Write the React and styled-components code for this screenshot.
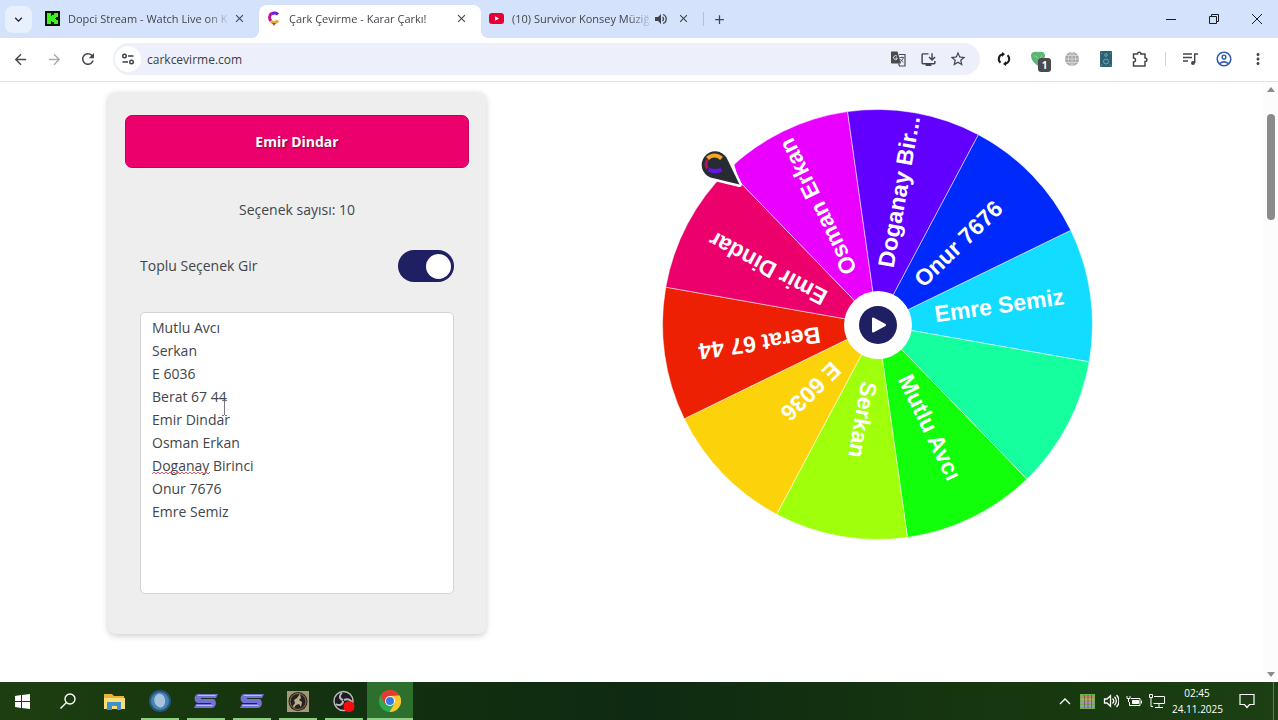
import { useState } from 'react'
import styled, { createGlobalStyle, css } from 'styled-components'
import {
  MdArrowBack,
  MdArrowForward,
  MdRefresh,
  MdStarBorder,
  MdOutlineInstallDesktop,
  MdOutlineAccountCircle,
  MdMoreVert,
  MdClose,
  MdAdd,
  MdKeyboardArrowDown
} from 'react-icons/md'


const GlobalStyle = createGlobalStyle`
  * {
    box-sizing: border-box;
  }
  body {
    margin: 0;
    font-family: 'Open Sans', 'Noto Sans', sans-serif;
    color: #42454a;
    background: #fff;
  }
  button {
    padding: 0;
    border: 0;
    font: inherit;
    color: inherit;
    background: none;
    cursor: pointer;
  }
  svg {
    display: block;
    flex: none;
  }
`

const Screen = styled.div`
  display: flex;
  flex-direction: column;
  min-height: 100vh;
`

/* Tab strip */

const TabStrip = styled.div`
  display: flex;
  align-items: stretch;
  height: 38px;
  padding-left: 5px;
  background: #d5e2fc;
`
const TabSearch = styled.button`
  display: grid;
  place-items: center;
  align-self: center;
  width: 27px;
  height: 27px;
  margin-right: 5px;
  border-radius: 8px;
  color: #1d1f24;
  background: #e8f0fe;
`
const Tab = styled.div`
  position: relative;
  display: flex;
  align-items: center;
  width: 222px;
  margin-top: 5px;
  padding: 0 13px 6px 8px;
  border-radius: 8px 8px 0 0;
  ${props => props.$active && css`
    background: #fff;
    &::before,
    &::after {
      content: '';
      position: absolute;
      bottom: 0;
      width: 8px;
      height: 8px;
    }
    &::before {
      right: 100%;
      background: radial-gradient(circle at 0 0, transparent 8px, #fff 8px);
    }
    &::after {
      left: 100%;
      background: radial-gradient(circle at 100% 0, transparent 8px, #fff 8px);
    }
  `}
`
const TabTitle = styled.button`
  flex: 1;
  min-width: 0;
  margin: 0 1px 0 8px;
  overflow: hidden;
  font-size: 11px;
  line-height: 16px;
  text-align: left;
  white-space: nowrap;
  mask-image: linear-gradient(90deg, #000 calc(100% - 24px), transparent);
`
const TabButton = styled.button`
  display: grid;
  place-items: center;
  width: 14px;
  height: 16px;
  margin-left: ${props => (props.$spaced ? '8px' : '0')};
`
const StripDivider = styled.div`
  align-self: center;
  width: 1px;
  height: 14px;
  background: #a9c1ee;
`
const NewTab = styled.button`
  display: grid;
  place-items: center;
  width: 30px;
`
const WindowButtons = styled.div`
  display: flex;
  margin-left: auto;
`
const WindowButton = styled.button`
  display: grid;
  place-items: center;
  width: 43px;
  color: #1b1d22;
`

/* Toolbar */

const Toolbar = styled.div`
  display: flex;
  align-items: center;
  height: 44px;
  padding: 0 3px 1px;
  border-bottom: 1px solid #dfe1e5;
  background: #fff;
`
const ToolButton = styled.button`
  position: relative;
  display: grid;
  place-items: center;
  width: 34px;
  height: 34px;
  color: ${props => props.$color || '#44474c'};
`
const AddressBar = styled.div`
  display: flex;
  align-items: center;
  flex: 1;
  height: 32px;
  margin: 0 7px 0 8px;
  padding: 0 7px 0 2px;
  border-radius: 16px;
  background: #edeffa;
`
const SiteInfo = styled.button`
  display: grid;
  place-items: center;
  width: 26px;
  height: 26px;
  border-radius: 13px;
  background: #fff;
`
const AddressInput = styled.input`
  flex: 1;
  min-width: 0;
  margin-left: 6px;
  padding: 0;
  border: 0;
  outline: 0;
  font: inherit;
  font-size: 12px;
  color: #3c3f44;
  background: transparent;
`
const AddressButton = styled.button`
  display: grid;
  place-items: center;
  width: 30px;
  height: 30px;
`
const Badge = styled.span`
  position: absolute;
  right: 4px;
  bottom: 4px;
  width: 13px;
  height: 14px;
  border-radius: 3px;
  font-size: 10px;
  font-weight: 700;
  line-height: 14px;
  color: #fff;
  background: #4b4b4b;
`
const ToolDivider = styled.div`
  width: 1px;
  height: 14px;
  margin: 0 7px 0 8px;
  background: #c9d3e6;
`

/* Page */

const Viewport = styled.div`
  display: flex;
  flex: 1;
`
const Page = styled.main`
  flex: 1;
  padding: 10px 0 48px;
`
const Columns = styled.div`
  display: grid;
  grid-template-columns: minmax(0, 492px) minmax(0, 1fr);
  justify-items: center;
  align-items: start;
  max-width: 1161px;
  margin: 0 auto;
`
const Card = styled.section`
  width: 100%;
  max-width: 378px;
  padding: 23px 17px 40px;
  border-radius: 8px;
  background: #eee;
  box-shadow: 0 2px 6px rgba(0, 0, 0, 0.2);
`
const Winner = styled.button`
  width: 100%;
  height: 53px;
  border: 1px solid #c4005f;
  border-radius: 7px;
  font-size: 14px;
  font-weight: 700;
  color: #fff;
  text-shadow: 1px 1px 2px rgba(0, 0, 0, 0.4);
  background: #ec006b;
`
const Count = styled.p`
  margin: 31px 0 29px;
  font-size: 14px;
  line-height: 22px;
  text-align: center;
`
const Field = styled.label`
  display: flex;
  align-items: center;
  justify-content: space-between;
  margin: 0 15px 30px;
  font-size: 14px;
  line-height: 22px;
`
const Switch = styled.input`
  appearance: none;
  display: flex;
  align-items: center;
  width: 56px;
  height: 32px;
  margin: 0;
  padding: 0 3px;
  border-radius: 16px;
  background: #1f1f64;
  &::before {
    content: '';
    width: 25px;
    height: 25px;
    border-radius: 50%;
    background: #fff;
  }
  &:checked::before {
    margin-left: auto;
  }
`
const Editor = styled.div`
  position: relative;
  margin: 0 15px;
`
const OptionsInput = styled.textarea`
  display: block;
  width: 100%;
  height: 282px;
  padding: 3px 11px;
  border: 1px solid #d4d4d4;
  border-radius: 5px;
  outline: 0;
  resize: none;
  font: inherit;
  font-size: 14px;
  line-height: 23px;
  color: #42454a;
  background: #fff;
`
const Squiggle = styled.svg`
  position: absolute;
  top: 159px;
  left: 12px;
`
const TextCursor = styled.svg`
  position: absolute;
  top: 88px;
  left: 81px;
`
const WheelBox = styled.div`
  position: relative;
  width: 100%;
  max-width: 431px;
  margin-top: 17px;
`
const WheelSvg = styled.svg`
  width: 100%;
  overflow: visible;
  font-family: 'Liberation Sans', Arial, sans-serif;
  font-size: 23px;
  font-weight: 700;
`
const SpinButton = styled.button`
  position: absolute;
  inset: 0;
  display: grid;
  place-items: center;
  width: 68px;
  height: 68px;
  margin: auto;
  border-radius: 50%;
  background: #fff;
`
const ScrollTrack = styled.div`
  display: flex;
  flex-direction: column;
  align-items: center;
  width: 15px;
  padding: 5px 0;
  background: #fcfcfc;
`
const ScrollThumb = styled.div`
  width: 8px;
  height: 106px;
  margin: 22px 0 auto;
  border-radius: 4px;
  background: #8b8b8b;
`

/* Taskbar */

const Taskbar = styled.footer`
  display: flex;
  height: 38px;
  color: #fff;
  background: linear-gradient(90deg, #1d3f10, #12300f 30%, #0f2a12 50%, #17380f 80%, #1c3f14);
`
const TaskButton = styled.button`
  display: grid;
  place-items: center;
  width: ${props => (props.$start ? '45px' : '46px')};
  background: ${props => (props.$active ? '#2d6f2c' : 'transparent')};
  ${props => props.$open && css`
    background-image: linear-gradient(#8fce85, #8fce85);
    background-repeat: no-repeat;
    background-position: bottom;
    background-size: ${props.$active ? '100%' : '38px'} 2px;
  `}
`
const Tray = styled.div`
  display: flex;
  align-items: center;
  margin-left: auto;
`
const TrayButton = styled.button`
  display: grid;
  place-items: center;
  width: 23px;
  height: 38px;
`
const Notifications = styled(TrayButton)`
  width: 49px;
  margin-right: 2px;
`
const Clock = styled.time`
  display: block;
  width: 50px;
  margin-left: 4px;
  font-size: 10px;
  line-height: 16px;
  text-align: center;
  white-space: nowrap;
`
const ShowDesktop = styled.button`
  width: 5px;
  height: 38px;
  border-left: 1px solid #5d7a58;
`

const SLICES = [
  { label: 'Emre Semiz', color: '#12dcff' },
  { label: '', color: '#16ff9e' },
  { label: 'Mutlu Avcı', color: '#12ff0c' },
  { label: 'Serkan', color: '#a0ff0a' },
  { label: 'E 6036', color: '#fcd30b' },
  { label: 'Berat 67 44', color: '#ee2004' },
  { label: 'Emir Dindar', color: '#ec006b' },
  { label: 'Osman Erkan', color: '#ea00ff' },
  { label: 'Doganay Bir...', color: '#6200ff' },
  { label: 'Onur 7676', color: '#0029fb' }
]

const OPTIONS = [
  'Mutlu Avcı',
  'Serkan',
  'E 6036',
  'Berat 67 44',
  'Emir Dindar',
  'Osman Erkan',
  'Doganay Birinci',
  'Onur 7676',
  'Emre Semiz'
].join('\n')

const RADIUS = 215
const STEP = 360 / SLICES.length
const FIRST_ANGLE = -8

function pointAt(angle) {
  const rad = (angle * Math.PI) / 180
  return `${RADIUS * Math.cos(rad)} ${RADIUS * Math.sin(rad)}`
}

/**
 * The wheel, drawn around its own centre.
 */
function Wheel() {
  return (
    <WheelBox>
      <WheelSvg viewBox="-215.5 -215.5 431 431">
        {SLICES.map((slice, index) => {
          const angle = FIRST_ANGLE + index * STEP
          const from = pointAt(angle - STEP / 2)
          const to = pointAt(angle + STEP / 2)
          return (
            <g key={slice.color}>
              <path
                d={`M0 0L${from}A${RADIUS} ${RADIUS} 0 0 1 ${to}Z`}
                fill={slice.color}
                stroke="#fff"
                strokeOpacity="0.5"
              />
              <text
                x="58"
                y="6"
                fill="#fff"
                transform={`rotate(${angle})`}
              >
                {slice.label}
              </text>
            </g>
          )
        })}
        <g transform="translate(-163 -161)">
          <path
            d="M24.500 21.500L17 -5A15 15 0 1 0 -6 13Z"
            fill="#fff"
            stroke="#fff"
            strokeWidth="2"
            strokeLinejoin="round"
          />
          <path d="M25 21L12 -6A13.500 13.500 0 1 0 -4 14Z" fill="#fff" stroke="#fff" strokeWidth="5" strokeLinejoin="round" />
          <path d="M25 21L12 -6A13.500 13.500 0 1 0 -4 14Z" fill="#272b33" />
          <path d="M-7 -5C-3 -9 3 -9 7 -5" fill="none" stroke="#f5a623" strokeWidth="4" />
          <path d="M-7 -4C-9 -1 -9 3 -7 5" fill="none" stroke="#b0155c" strokeWidth="3" />
          <path d="M-6 6C-2 8 3 8 7 6" fill="none" stroke="#6a12e8" strokeWidth="4" />
        </g>
      </WheelSvg>
      <SpinButton aria-label="Çevir">
        <svg width="38" height="38" viewBox="0 0 38 38">
          <circle cx="19" cy="19" r="19" fill="#1f1f64" />
          <path d="M14 12.500v13L26 19z" fill="#fff" stroke="#fff" strokeWidth="2" strokeLinejoin="round" />
        </svg>
      </SpinButton>
    </WheelBox>
  )
}

function KickIcon() {
  return (
    <svg width="15" height="15" viewBox="0 0 15 15">
      <path d="M0 0h15v15H0z" fill="#071407" />
      <path d="M2 2h4v3h1V4h2V2h4v4h-2v1h-1v1h1v1h2v4H9v-2H7v-1H6v3H2z" fill="#3df31b" />
    </svg>
  )
}

function WheelIcon() {
  return (
    <svg width="14" height="16" viewBox="0 0 14 16" fill="none">
      <path d="M11 3.500A5 5 0 0 0 4.500 3" stroke="#6d1de0" strokeWidth="3" />
      <path d="M4.500 2.500A5 5 0 0 0 4 10" stroke="#c3138f" strokeWidth="3" />
      <path d="M4 10.500C6 12 9 12 11 9.500" stroke="#f2a024" strokeWidth="3" />
      <path d="M5 12h4l-2 3z" fill="#8a5a3c" />
    </svg>
  )
}

function YoutubeIcon() {
  return (
    <svg width="15" height="11" viewBox="0 0 15 11">
      <rect width="15" height="11" rx="3" fill="#e60032" />
      <path d="M6 3.200v4.600l4-2.300z" fill="#fff" />
    </svg>
  )
}

function SpeakerIcon({ size, color }) {
  return (
    <svg width={size} height={size} viewBox="0 0 16 16" fill="none" stroke={color} strokeWidth="1.300">
      <path d="M1.500 6v4h2.500l3.500 3.200V2.800L4 6z" />
      <path d="M9.500 5.500c1.400 1.400 1.400 3.600 0 5M11.500 3.800c2.400 2.400 2.400 6 0 8.400M13.500 2c3.300 3.300 3.300 8.700 0 12" />
    </svg>
  )
}

function TabSpeakerIcon() {
  return (
    <svg width="12" height="12" viewBox="0 0 12 12">
      <path d="M0 4h3l3-3v10L3 8H0z" fill="#42454a" />
      <path d="M7.500 4c1.300 1 1.300 3 0 4M8 1.500c4.300 1.500 4.300 7.500 0 9" fill="none" stroke="#42454a" strokeWidth="1.300" />
    </svg>
  )
}

function TranslateIcon() {
  return (
    <svg width="16" height="16" viewBox="0 0 16 16">
      <path d="M1 .5h6.500L11 12.500H2a1 1 0 0 1-1-1z" fill="#484b50" />
      <path d="M7 5.200A2 2 0 1 0 7 8V7H5.500" fill="none" stroke="#e8eaf2" />
      <path d="M9 3.500H15v11.500H9.500l-1-2.500" fill="none" stroke="#484b50" strokeWidth="1.200" />
      <path d="M9.500 6.500h4.500M12 5.500v1M13.300 6.500c-.5 2-1.500 3.500-3 4.500M10.500 8c.5 1.500 1.500 2.500 3 3.200" fill="none" stroke="#50545a" strokeWidth="0.900" />
    </svg>
  )
}

function Browser() {
  return (
    <header>
      <TabStrip>
        <TabSearch aria-label="Sekmelerde ara"><MdKeyboardArrowDown size={15} /></TabSearch>
        <Tab>
          <KickIcon />
          <TabTitle>Dopci Stream - Watch Live on K</TabTitle>
          <TabButton aria-label="Kapat"><MdClose size={13} /></TabButton>
        </Tab>
        <Tab $active>
          <WheelIcon />
          <TabTitle>Çark Çevirme - Karar Çarkı!</TabTitle>
          <TabButton aria-label="Kapat"><MdClose size={13} /></TabButton>
        </Tab>
        <Tab>
          <YoutubeIcon />
          <TabTitle>(10) Survivor Konsey Müziğ</TabTitle>
          <TabButton aria-label="Sesi kapat"><TabSpeakerIcon /></TabButton>
          <TabButton $spaced aria-label="Kapat"><MdClose size={13} /></TabButton>
        </Tab>
        <StripDivider />
        <NewTab aria-label="Yeni sekme"><MdAdd size={15} /></NewTab>
        <WindowButtons>
          <WindowButton aria-label="Simge durumuna küçült">
            <svg width="10" height="10" viewBox="0 0 10 10"><path d="M0 5.500h10" stroke="currentColor" /></svg>
          </WindowButton>
          <WindowButton aria-label="Geri yükle">
            <svg width="10" height="10" viewBox="0 0 10 10" fill="none" stroke="currentColor">
              <path d="M.5 2.500h7v7h-7zM2.500 2.500v-2h7v7h-2" />
            </svg>
          </WindowButton>
          <WindowButton aria-label="Pencereyi kapat">
            <svg width="10" height="10" viewBox="0 0 10 10"><path d="M0 0l10 10M10 0L0 10" stroke="currentColor" /></svg>
          </WindowButton>
        </WindowButtons>
      </TabStrip>
      <Toolbar>
        <ToolButton aria-label="Geri"><MdArrowBack size={17} /></ToolButton>
        <ToolButton aria-label="İleri" $color="#a9abb0"><MdArrowForward size={17} /></ToolButton>
        <ToolButton aria-label="Yenile"><MdRefresh size={18} /></ToolButton>
        <AddressBar>
          <SiteInfo aria-label="Site bilgileri">
            <svg width="14" height="14" viewBox="0 0 14 14" fill="none" stroke="#3c3f44" strokeWidth="1.400">
              <circle cx="3.500" cy="4" r="1.800" />
              <circle cx="10.500" cy="10" r="1.800" />
              <path d="M7 4h5.500M1.500 10H7" />
            </svg>
          </SiteInfo>
          <AddressInput aria-label="Adres" defaultValue="carkcevirme.com" />
          <AddressButton aria-label="Çevir"><TranslateIcon /></AddressButton>
          <AddressButton aria-label="Yükle"><MdOutlineInstallDesktop size={17} /></AddressButton>
          <AddressButton aria-label="Yer işareti"><MdStarBorder size={18} /></AddressButton>
        </AddressBar>
        <ToolButton aria-label="Uzantı 1" $color="#1b1c1e">
          <svg width="14" height="14" viewBox="0 0 14 14" fill="none" stroke="currentColor" strokeWidth="2">
            <path d="M5.500 2.200A5 5 0 0 0 3.500 10.800M8.500 11.800A5 5 0 0 0 10.500 3.200" />
            <path d="M5 0l3 2-3 3zM9 14l-3-2 3-3z" fill="currentColor" stroke="none" />
          </svg>
        </ToolButton>
        <ToolButton aria-label="Uzantı 2">
          <svg width="16" height="16" viewBox="0 0 16 16">
            <path d="M1 4C1 1 5 0 8 1c3-1 7 0 7 3 0 5-4 9-7 11C4 12 1 9 1 4z" fill="#5cb577" />
            <path d="M4 5c3 0 4 2 5 4l3-5" fill="none" stroke="#8fd3a2" />
          </svg>
          <Badge>1</Badge>
        </ToolButton>
        <ToolButton aria-label="Uzantı 3">
          <svg width="14" height="14" viewBox="0 0 14 14">
            <circle cx="7" cy="7" r="7" fill="#a5a5a5" />
            <path d="M0 7h14M1 3.500h12M1 10.500h12M7 0v14M7 0C2 4 2 10 7 14M7 0c5 4 5 10 0 14" fill="none" stroke="#dedede" strokeWidth="0.800" />
          </svg>
        </ToolButton>
        <ToolButton aria-label="Uzantı 4">
          <svg width="12" height="16" viewBox="0 0 12 16">
            <rect width="12" height="16" rx="1" fill="#2c6274" />
            <g fill="none" stroke="#6ea6b4">
              <circle cx="6" cy="10.500" r="2.500" />
              <circle cx="6" cy="4" r="1.300" />
              <path d="M1.500 2v1M10.500 2v1M1.500 13.500v1M10.500 13.500v1" />
            </g>
          </svg>
        </ToolButton>
        <ToolButton aria-label="Uzantılar">
          <svg width="16" height="16" viewBox="0 0 16 16" fill="none" stroke="currentColor" strokeWidth="1.500">
            <path d="M1.500 3h4c0-2.500 3.500-2.500 3.500 0h4v4c2.500 0 2.500 3.500 0 3.500V15H1.500v-4c2.600-.2 2.600-3.800 0-4z" />
          </svg>
        </ToolButton>
        <ToolDivider />
        <ToolButton aria-label="Medya">
          <svg width="15" height="14" viewBox="0 0 15 14" fill="none" stroke="currentColor" strokeWidth="1.500">
            <path d="M0 2h9M0 5.500h9M0 9h5" />
            <path d="M11.700 11V2H15" />
            <circle cx="10" cy="11" r="2" fill="currentColor" stroke="none" />
          </svg>
        </ToolButton>
        <ToolButton aria-label="Profil" $color="#2f5ab0"><MdOutlineAccountCircle size={18} /></ToolButton>
        <ToolButton aria-label="Menü"><MdMoreVert size={18} /></ToolButton>
      </Toolbar>
    </header>
  )
}

function SAppIcon() {
  return (
    <svg width="24" height="14" viewBox="0 0 24 14">
      <path d="M4 0h20l-2 4H7v1h12c4 0 4 9-1 9H0l2-4h15V9H4C-1 9 0 0 4 0z" fill="#7471d4" />
      <path d="M4 1h18l-1 1H4zM3 12h15l1-1H2z" fill="#b9bcf5" />
    </svg>
  )
}

function WindowsTaskbar() {
  return (
    <Taskbar>
      <TaskButton $start aria-label="Başlat">
        <svg width="15" height="15" viewBox="0 0 15 15" fill="#fff">
          <path d="M0 2l6-.9v6H0zM7 1l8-1v7.100H7zM0 8h6v6l-6-.9zM7 8h8v7l-8-1z" />
        </svg>
      </TaskButton>
      <TaskButton aria-label="Ara">
        <svg width="16" height="16" viewBox="0 0 16 16" fill="none" stroke="#fff" strokeWidth="1.400">
          <circle cx="10" cy="6" r="5" />
          <path d="M6.500 9.500L.5 15.500" />
        </svg>
      </TaskButton>
      <TaskButton aria-label="Dosya Gezgini">
        <svg width="21" height="17" viewBox="0 0 21 17">
          <path d="M0 1h8l2 2h10v13H0z" fill="#e8b23c" />
          <path d="M0 5h21v11H0z" fill="#fbdc75" />
          <path d="M3 17V9h14v8h-4v-4H8v4z" fill="#3f93cd" />
        </svg>
      </TaskButton>
      <TaskButton $open aria-label="Tarayıcı">
        <svg width="22" height="22" viewBox="0 0 22 22">
          <circle cx="11" cy="11" r="11" fill="#27547c" />
          <circle cx="11" cy="11" r="9" fill="#4585b4" />
          <path d="M9 4c5-1 8 4 7 9-1 5-6 6-9 2-3-4-2-9 2-11z" fill="#a9c3dc" />
        </svg>
      </TaskButton>
      <TaskButton $open aria-label="Uygulama 1"><SAppIcon /></TaskButton>
      <TaskButton $open aria-label="Uygulama 2"><SAppIcon /></TaskButton>
      <TaskButton $open aria-label="Oyun">
        <svg width="22" height="21" viewBox="0 0 22 21">
          <path d="M0 0h22v21H0z" fill="#a39878" />
          <circle cx="11" cy="10.500" r="9.500" fill="#29221a" />
          <circle cx="11" cy="10.500" r="8" fill="none" stroke="#83775c" />
          <path d="M13 3l1 4-2 2 3 2-1 5-2-3-3 1-2 3-1-2 2-3-1-3 3-2z" fill="#b9ae8f" />
        </svg>
      </TaskButton>
      <TaskButton $open aria-label="OBS">
        <svg width="22" height="22" viewBox="0 0 22 22">
          <circle cx="10.500" cy="11" r="9.500" fill="#1d1c20" stroke="#b9b9bd" strokeWidth="1.500" />
          <g fill="none" stroke="#b9b9bd" strokeWidth="2">
            <path d="M10 10C6 9 6 5 9 3M11 10c4-2 7 0 8 3M10 11c0 4-4 5-7 3" />
          </g>
          <circle cx="16" cy="16.500" r="5.500" fill="#f40d0d" />
        </svg>
      </TaskButton>
      <TaskButton $open $active aria-label="Chrome">
        <svg width="22" height="22" viewBox="0 0 22 22">
          <circle cx="11" cy="11" r="11" fill="#2da94f" />
          <path d="M1.500 5.500a11 11 0 0 1 19 0L11 6l-5 8z" fill="#e33b2e" />
          <path d="M20.500 5.500A11 11 0 0 1 10.500 22L15.500 13.500 11 6z" fill="#fdc727" />
          <circle cx="11" cy="11" r="5" fill="#fff" />
          <circle cx="11" cy="11" r="4" fill="#3a78e7" />
        </svg>
      </TaskButton>
      <Tray>
        <TrayButton aria-label="Gizli simgeler">
          <svg width="12" height="8" viewBox="0 0 12 8"><path d="M1 7l5-5 5 5" fill="none" stroke="#fff" strokeWidth="1.300" /></svg>
        </TrayButton>
        <TrayButton aria-label="Sistem">
          <svg width="15" height="15" viewBox="0 0 15 15">
            <path d="M0 0h15v15H0z" fill="#6fae52" />
            <path d="M1 2.500h13" stroke="#c9826a" strokeWidth="2" />
            <path d="M1 5.500h13" stroke="#d8a34e" strokeWidth="2" />
            <path d="M1 8.500h13M1 12h13" stroke="#b98bd0" strokeWidth="2" />
            <path d="M4.500 1v13M8 1v13M11.500 1v13" stroke="#2b3f30" strokeWidth="0.500" />
          </svg>
        </TrayButton>
        <TrayButton aria-label="Ses"><SpeakerIcon size={16} color="#fff" /></TrayButton>
        <TrayButton aria-label="Pil">
          <svg width="16" height="12" viewBox="0 0 16 12" fill="none" stroke="#fff">
            <path d="M5 3.500h9v7H3.500V7" />
            <path d="M6.500 5.500h6v3h-6z" fill="#fff" />
            <path d="M1 1v2.500h3V1M2.500 4v3M15.500 5.500v3" />
          </svg>
        </TrayButton>
        <TrayButton aria-label="Ağ">
          <svg width="16" height="14" viewBox="0 0 16 14" fill="none" stroke="#fff">
            <path d="M5 2.500h10.500v7H4.500M10 10v3M6 13.500h8" />
            <path d="M.5.500h3v3h-3zM2 4v8.500h2" />
          </svg>
        </TrayButton>
        <Clock>02:45<br />24.11.2025</Clock>
        <Notifications aria-label="Bildirimler">
          <svg width="16" height="16" viewBox="0 0 16 16" fill="none" stroke="#fff" strokeWidth="1.200">
            <path d="M1 1.500h14v10h-4.500L8 14.500l-2.500-3H1z" />
          </svg>
        </Notifications>
        <ShowDesktop aria-label="Masaüstünü göster" />
      </Tray>
    </Taskbar>
  )
}

function App() {
  const [options, setOptions] = useState(OPTIONS)
  const [bulk, setBulk] = useState(true)

  return (
    <Screen>
      <GlobalStyle />
      <Browser />
      <Viewport>
        <Page>
          <Columns>
            <Card>
              <Winner>Emir Dindar</Winner>
              <Count>Seçenek sayısı: 10</Count>
              <Field>
                Toplu Seçenek Gir
                <Switch
                  type="checkbox"
                  checked={bulk}
                  onChange={e => setBulk(e.target.checked)}
                />
              </Field>
              <Editor>
                <OptionsInput
                  aria-label="Seçenekler"
                  spellCheck={false}
                  value={options}
                  onChange={e => setOptions(e.target.value)}
                />
                <Squiggle width="59" height="4" viewBox="0 0 59 4">
                  <path
                    d="M0 3l2-2 2 2 2-2 2 2 2-2 2 2 2-2 2 2 2-2 2 2 2-2 2 2 2-2 2 2 2-2 2 2 2-2 2 2 2-2 2 2 2-2 2 2 2-2 2 2 2-2 2 2 2-2 2 2 2-2"
                    fill="none"
                    stroke="#e0526a"
                  />
                </Squiggle>
                <TextCursor width="7" height="16" viewBox="0 0 7 16">
                  <path d="M1 .5h2M4 .5h2M3.500 1v14M1 15.500h2M4 15.500h2" stroke="#77797e" />
                </TextCursor>
              </Editor>
            </Card>
            <Wheel />
          </Columns>
        </Page>
        <ScrollTrack>
          <svg width="8" height="5" viewBox="0 0 8 5"><path d="M0 5l4-5 4 5z" fill="#8b8b8b" /></svg>
          <ScrollThumb />
          <svg width="8" height="5" viewBox="0 0 8 5"><path d="M0 0l4 5 4-5z" fill="#8b8b8b" /></svg>
        </ScrollTrack>
      </Viewport>
      <WindowsTaskbar />
    </Screen>
  )
}

export default App
